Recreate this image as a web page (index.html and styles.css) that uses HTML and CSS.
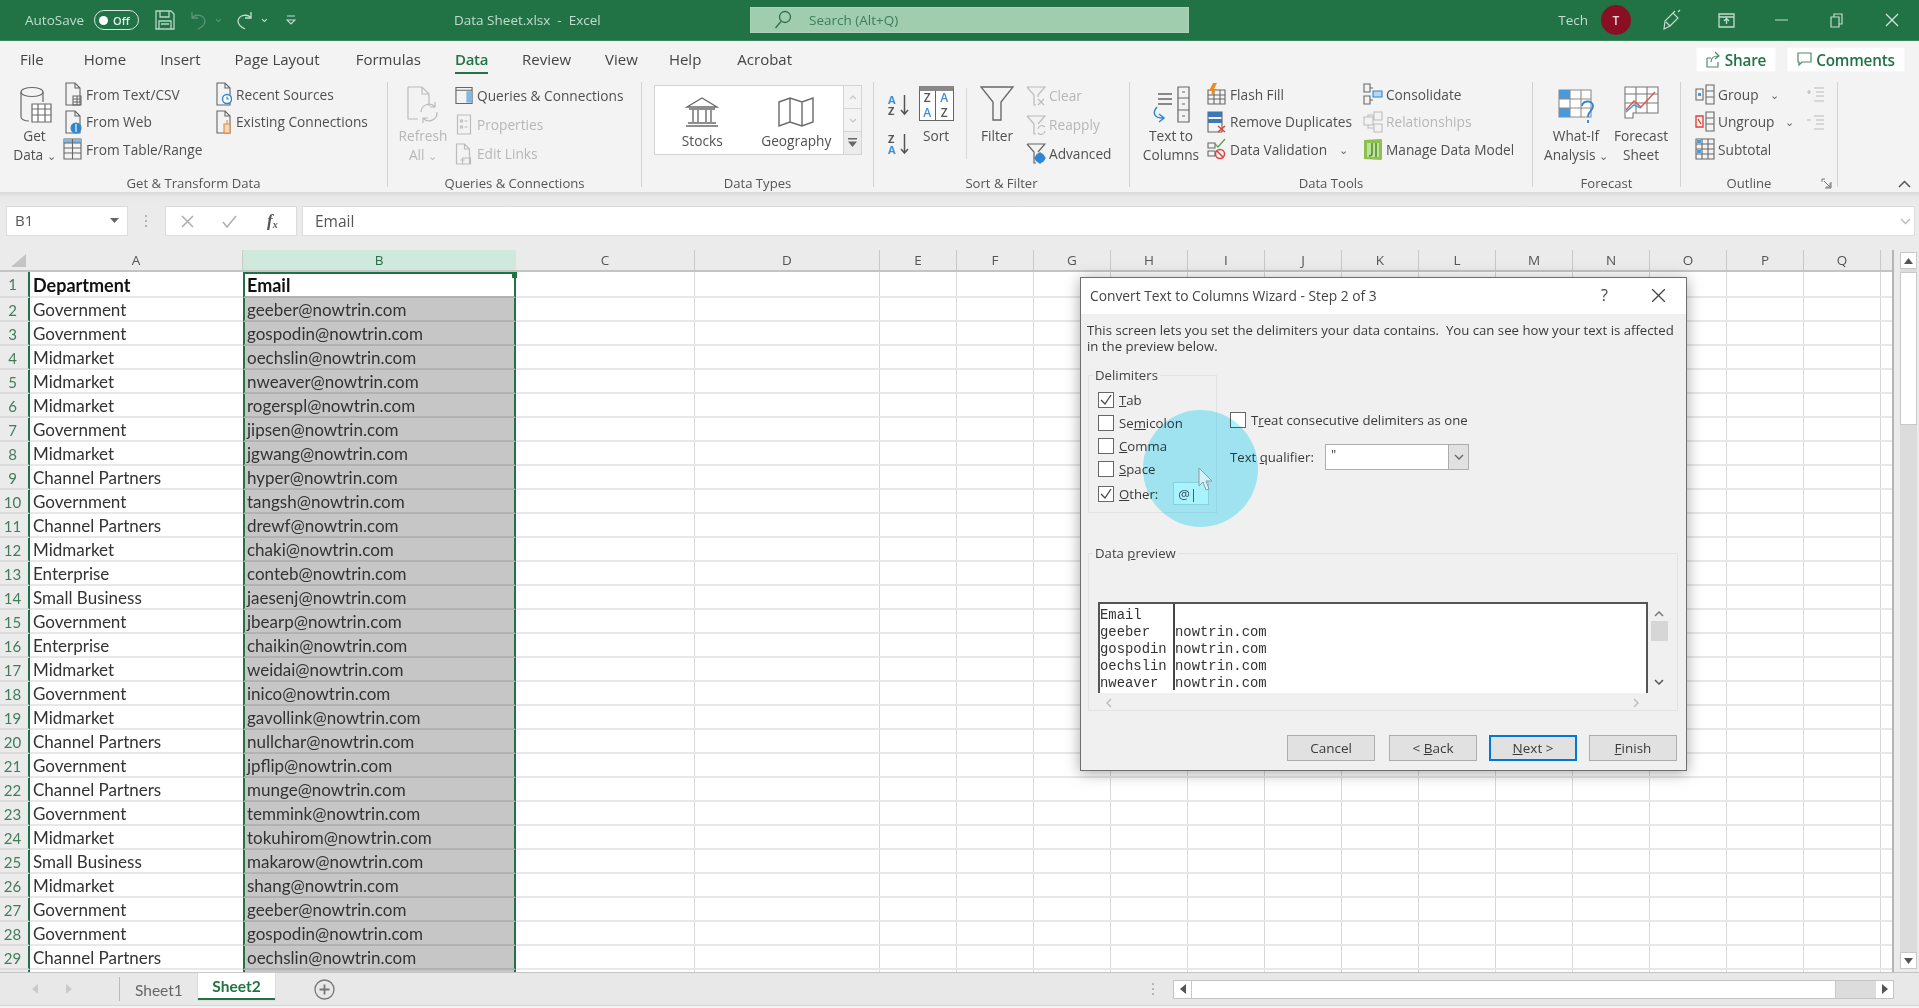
FILE: index.html
```html
<!DOCTYPE html>
<html lang="en">
<head>
<meta charset="utf-8">
<title>Data Sheet.xlsx - Excel</title>
<link rel="stylesheet" href="styles.css">
</head>
<body>
<div class="app">

<header class="titlebar">
  <div class="qat">
    <span class="autosave">AutoSave</span>
    <span class="toggle"><i class="knob"></i><b>Off</b></span>
    <svg class="q-save" width="20" height="20" viewBox="0 0 20 20" fill="none" stroke="#b9d5c5" stroke-width="1.3"><path d="M1 1h15l3 3v15H1z"/><path d="M5 1v6h9V1M4 19v-8h12v8M6 14h8"/></svg>
    <svg class="q-undo" width="19" height="20" viewBox="0 0 19 20" fill="none" stroke="#5b9678" stroke-width="1.3"><path d="M3 2v6h6M3 8c3-4 12-4 13 3 0 4-3 6-7 8"/></svg>
    <span class="q-caret dim">⌄</span>
    <svg class="q-redo" width="19" height="20" viewBox="0 0 19 20" fill="none" stroke="#c3dccd" stroke-width="1.3"><path d="M16 2v6h-6M16 8c-3-4-12-4-13 3 0 4 3 6 7 8"/></svg>
    <span class="q-caret">⌄</span>
    <svg class="q-custom" width="10" height="12" viewBox="0 0 10 12" fill="none" stroke="#c3dccd" stroke-width="1.2"><path d="M1 2h8M1 6h8l-4 4z"/></svg>
  </div>
  <div class="doc-title">Data Sheet.xlsx&nbsp; - &nbsp;Excel</div>
  <div class="search">
    <svg width="18" height="20" viewBox="0 0 18 20" fill="none" stroke="#2f6f4c" stroke-width="1.3"><circle cx="11" cy="7" r="5.5"/><path d="M7 11.5 1.5 18"/></svg>
    <span>Search (Alt+Q)</span>
  </div>
  <div class="win">
    <span class="user">Tech</span>
    <span class="avatar">T</span>
    <span class="wb"><svg width="20" height="22" viewBox="0 0 20 22" fill="none" stroke="#c3dccd" stroke-width="1.2"><path d="M2 20l1-8L11 4l5 5-8 8zM11 4l2-2M16 3l2-2M4 13l4 4"/></svg></span>
    <span class="wb"><svg width="17" height="15" viewBox="0 0 17 15" fill="none" stroke="#c3dccd" stroke-width="1.3"><path d="M1 1h15v13H1zM1 4h15M8.500 11V6M6 8l2.500-2.500L11 8"/></svg></span>
    <span class="wb"><svg width="13" height="2" viewBox="0 0 13 2" stroke="#c3dccd"><path d="M0 1h13"/></svg></span>
    <span class="wb"><svg width="13" height="15" viewBox="0 0 13 15" fill="none" stroke="#c3dccd" stroke-width="1.2"><path d="M1 4h8v10H1zM4 4V1h8v10H9"/></svg></span>
    <span class="wb"><svg width="14" height="14" viewBox="0 0 14 14" stroke="#d5e7dc" stroke-width="1.3"><path d="M1 1l12 12M13 1L1 13"/></svg></span>
  </div>
</header>

<nav class="tabs">
  <span class="tab">File</span><span class="tab">Home</span><span class="tab">Insert</span><span class="tab">Page Layout</span><span class="tab">Formulas</span><span class="tab on">Data</span><span class="tab">Review</span><span class="tab">View</span><span class="tab">Help</span><span class="tab">Acrobat</span>
  <div class="tab-actions">
    <span class="act share"><svg width="15" height="17" viewBox="0 0 15 17" fill="none" stroke="#4d8a69" stroke-width="1.2"><path d="M1 7h4M1 7v9h11v-5M5 11c0-4 3-6 7-6M9 1l4 4-4 3"/></svg>Share</span>
    <span class="act comments"><svg width="15" height="15" viewBox="0 0 15 15" fill="none" stroke="#4d8a69" stroke-width="1.2"><path d="M1 1h13v9H5l-3 3v-3H1z"/></svg>Comments</span>
  </div>
</nav>

<section class="ribbon">
  <div class="grp g1">
    <div class="body">
      <div class="big w53">
        <div class="ico"><svg width="34" height="39" viewBox="0 0 34 39" fill="none" stroke="#6a6a6a" stroke-width="1.2"><ellipse cx="14" cy="6" rx="11" ry="4.500"/><path d="M3 6v25c0 2 3 4 8 4M25 6v10"/><path fill="#fff" d="M14 18h19v18H14z"/><path d="M14 23h19M14 29h19M20 18v18M27 18v18"/></svg></div>
        <div class="t">Get</div><div class="t">Data <em>⌄</em></div>
      </div>
      <div class="col c27 w151 ml4">
        <div class="it"><svg class="ic17" width="17" height="24" viewBox="0 0 17 24" fill="none" stroke="#666" stroke-width="1.1"><path d="M1 1h9l5 5v17H1zM10 1v5h5"/><path d="M8 14h8v9H8zM8 17h8M8 20h8M12 14v9"/></svg><span>From Text/CSV</span></div>
        <div class="it"><svg class="ic17" width="17" height="24" viewBox="0 0 17 24" fill="none" stroke="#666" stroke-width="1.1"><path d="M1 1h9l5 5v17H1zM10 1v5h5"/><circle cx="11" cy="18" r="5" fill="#2f86cf" stroke="#2f86cf"/><path d="M11 14v8" stroke="#fff"/></svg><span>From Web</span></div>
        <div class="it"><svg class="ic17 tbl" width="19" height="22" viewBox="0 0 19 22" fill="none" stroke="#666" stroke-width="1.1"><path d="M1 1h17v20H1z"/><path fill="#7fb6e2" stroke="none" d="M1 1h17v4H1z"/><path d="M1 5h17M1 10h17M1 15h17M9.500 1v20"/></svg><span>From Table/Range</span></div>
      </div>
      <div class="col c27">
        <div class="it"><svg class="ic16" width="16" height="24" viewBox="0 0 16 24" fill="none" stroke="#666" stroke-width="1.1"><path d="M1 1h8l5 5v17H1zM9 1v5h5"/><circle cx="11" cy="17" r="4.500" fill="#fff" stroke="#2f86cf" stroke-width="1.4"/><path d="M11 14.500V17h2" stroke="#2f86cf"/></svg><span>Recent Sources</span></div>
        <div class="it"><svg class="ic16" width="16" height="24" viewBox="0 0 16 24" fill="none" stroke="#666" stroke-width="1.1"><path d="M1 1h8l5 5v17H1zM9 1v5h5"/><path d="M8 14h6v9H8z" fill="#f7d9b8" stroke="#e08a3c"/><path d="M11 10v4" stroke="#e08a3c"/></svg><span>Existing Connections</span></div>
      </div>
    </div>
    <div class="label">Get &amp; Transform Data</div>
  </div>

  <div class="grp g2">
    <div class="body">
      <div class="big w48 off">
        <div class="ico"><svg width="32" height="38" viewBox="0 0 32 38" fill="none" stroke="#bcbcbc" stroke-width="1.2"><path d="M1 1h14l7 7v12M1 1v32h10M15 1v7h7"/><path d="M14 26a8 8 0 0 1 14-5M30 26a8 8 0 0 1-14 6M28 16v5h-5M16 37v-5h5"/></svg></div>
        <div class="t">Refresh</div><div class="t">All <em>⌄</em></div>
      </div>
      <div class="col c29 ml8">
        <div class="it"><svg class="ic18" width="19" height="21" viewBox="0 0 19 21" fill="none" stroke="#666" stroke-width="1.2"><path d="M1 2h17v17H1zM1 5h17"/><path fill="#7fb6e2" stroke="none" d="M12 6h5v12h-5z"/></svg><span>Queries &amp; Connections</span></div>
        <div class="it off"><svg class="ic18" width="15" height="21" viewBox="0 0 15 21" fill="none" stroke="#bcbcbc" stroke-width="1.2"><path d="M1 1h13v19H1zM4 6h2v2H4zM4 12h2v2H4zM8 7h3M8 13h3"/></svg><span>Properties</span></div>
        <div class="it off"><svg class="ic18" width="17" height="22" viewBox="0 0 17 22" fill="none" stroke="#bcbcbc" stroke-width="1.2"><path d="M1 1h8l5 5v15H1zM9 1v5h5M7 15h8v6H7zM5 17h4"/></svg><span>Edit Links</span></div>
      </div>
    </div>
    <div class="label">Queries &amp; Connections</div>
  </div>

  <div class="grp g3">
    <div class="body">
      <div class="gallery">
        <div class="gal-item gi1"><svg width="34" height="30" viewBox="0 0 34 30" fill="none" stroke="#6a6a6a" stroke-width="1.4"><path d="M2 10 17 1l15 9zM4 12h26M8 13v12M13 13v12M21 13v12M26 13v12M3 26h28M1 29h32"/></svg><span>Stocks</span></div>
        <div class="gal-item gi2"><svg width="36" height="30" viewBox="0 0 36 30" fill="none" stroke="#6a6a6a" stroke-width="1.4"><path d="M1 5l11-4 12 4 11-4v24l-11 4-12-4-11 4zM12 1v24M24 5v24"/></svg><span>Geography</span></div>
        <div class="gal-scroll">
          <span class="gs"><svg width="8" height="5" viewBox="0 0 8 5" fill="none" stroke="#c5c5c5" stroke-width="1.2"><path d="M1 4l3-3 3 3"/></svg></span>
          <span class="gs"><svg width="8" height="5" viewBox="0 0 8 5" fill="none" stroke="#c5c5c5" stroke-width="1.2"><path d="M1 1l3 3 3-3"/></svg></span>
          <span class="gs"><svg width="9" height="10" viewBox="0 0 9 10" fill="#666"><path d="M0 0h9v1.500H0zM0 3.500h9L4.500 9z"/></svg></span>
        </div>
      </div>
    </div>
    <div class="label">Data Types</div>
  </div>

  <div class="grp g4">
    <div class="body">
      <div class="sort-mini">
        <div class="azi"><div class="azl"><b class="blu">A</b><b>Z</b></div><svg width="9" height="22" viewBox="0 0 9 22" fill="none" stroke="#555" stroke-width="1.500"><path d="M4.500 1v19M1 16l3.500 4L8 16"/></svg></div>
        <div class="azi"><div class="azl"><b>Z</b><b class="blu">A</b></div><svg width="9" height="22" viewBox="0 0 9 22" fill="none" stroke="#555" stroke-width="1.500"><path d="M4.500 1v19M1 16l3.500 4L8 16"/></svg></div>
      </div>
      <div class="big w50 ml2">
        <div class="ico"><div class="sorti"><span>Z</span><span class="blu">A</span><span class="blu">A</span><span>Z</span></div></div>
        <div class="t">Sort</div>
      </div>
      <div class="vdiv"></div>
      <div class="big w50 ml5">
        <div class="ico"><svg width="34" height="35" viewBox="0 0 34 35" fill="none" stroke="#6a6a6a" stroke-width="1.4"><path d="M1 1h32L21 16v18h-8V16z"/></svg></div>
        <div class="t">Filter</div>
      </div>
      <div class="col c29 ml4">
        <div class="it off"><svg class="ic20" width="20" height="20" viewBox="0 0 20 20" fill="none" stroke="#bcbcbc" stroke-width="1.2"><path d="M1 1h18l-7 8v2M1 1l7 8v10h2M12 13l6 6M18 13l-6 6"/></svg><span>Clear</span></div>
        <div class="it off"><svg class="ic20" width="20" height="20" viewBox="0 0 20 20" fill="none" stroke="#bcbcbc" stroke-width="1.2"><path d="M1 1h18l-7 8M1 1l7 8v10h2M12 14a4 4 0 0 1 7-2M19 16a4 4 0 0 1-7 2"/></svg><span>Reapply</span></div>
        <div class="it"><svg class="ic20" width="20" height="22" viewBox="0 0 20 22" fill="none" stroke="#666" stroke-width="1.2"><path d="M1 1h18l-7 8M1 1l7 8v11h2"/><circle cx="14" cy="15" r="4.500" fill="#2f86cf" stroke="#2f86cf"/><path d="M14 9v12M8 15h12" stroke="#2f86cf"/></svg><span>Advanced</span></div>
      </div>
    </div>
    <div class="label">Sort &amp; Filter</div>
  </div>

  <div class="grp g5">
    <div class="body">
      <div class="big w64">
        <div class="ico"><svg width="38" height="37" viewBox="0 0 38 37" fill="none" stroke="#666" stroke-width="1.2"><path d="M26 1h11v35H26zM26 12h11M26 24h11M30 6h3M30 18h3M30 30h3"/><path d="M6 8h14M6 13h14M6 18h14" stroke-width="1.4"/><path d="M5 21c-5 6-3 11 6 11M7 28l5 4-5 4" stroke="#2f86cf" stroke-width="1.500"/></svg></div>
        <div class="t">Text to</div><div class="t">Columns</div>
      </div>
      <div class="col c27 w156 ml4">
        <div class="it"><svg class="ic19" width="19" height="22" viewBox="0 0 19 22" fill="none" stroke="#666" stroke-width="1.1"><path d="M1 7h17v14H1zM1 12h17M1 16h17M7 7v14M13 7v14"/><path d="M6 0h4L7 6h3l-6 7 1-5H2z" fill="#ef8a1d" stroke="none"/></svg><span>Flash Fill</span></div>
        <div class="it"><svg class="ic19" width="19" height="22" viewBox="0 0 19 22" fill="none" stroke="#666" stroke-width="1.1"><path d="M1 1h14v20H1z"/><path d="M1 1h14v5H1zM1 8h14v4H1z" fill="#3c78b8" stroke="none"/><path d="M11 15l7 6M18 15l-7 6" stroke="#d8443c" stroke-width="1.500"/></svg><span>Remove Duplicates</span></div>
        <div class="it"><svg class="ic19" width="19" height="22" viewBox="0 0 19 22" fill="none" stroke="#666" stroke-width="1.1"><path d="M1 5h7v5H1zM1 13h7v5H1z"/><path d="M8 6l3 3 7-8" stroke="#5aa85a" stroke-width="1.400"/><circle cx="13" cy="16" r="4.500" stroke="#d8443c" stroke-width="1.500"/><path d="M10 13l6 6" stroke="#d8443c" stroke-width="1.500"/></svg><span>Data Validation</span><em class="chev ml12">⌄</em></div>
      </div>
      <div class="col c27">
        <div class="it"><svg class="ic20" width="20" height="22" viewBox="0 0 20 22" fill="none" stroke="#666" stroke-width="1.1"><path d="M1 1h6v8H1zM1 13h6v8H1zM7 5h3M7 17h3M10 11h9"/><path d="M10 8h9v6h-9z" fill="#b8d6ef" stroke="#2f86cf"/></svg><span>Consolidate</span></div>
        <div class="it off"><svg class="ic20" width="20" height="22" viewBox="0 0 20 22" fill="none" stroke="#bcbcbc" stroke-width="1.1"><path d="M1 6h9v8H1zM11 1h8v8h-8zM11 13h8v8h-8zM5 6V4h6M5 14v3h6"/></svg><span>Relationships</span></div>
        <div class="it"><svg class="ic20" width="20" height="23" viewBox="0 0 20 23"><path d="M1 2l17-1q1 0 1 2v17q0 2-1 2L1 21z" fill="#8cc152"/><path d="M4 5h12v14H4z" fill="#bfe19a"/><path d="M9 5v10q0 3-3 3M13 5v14" fill="none" stroke="#4c8c2b" stroke-width="1.500"/></svg><span>Manage Data Model</span></div>
      </div>
    </div>
    <div class="label">Data Tools</div>
  </div>

  <div class="grp g6">
    <div class="body">
      <div class="big w70">
        <div class="ico down"><svg width="37" height="35" viewBox="0 0 37 35" fill="none" stroke="#8c8c8c" stroke-width="1.1"><path d="M1 1h32v27H1z" fill="#fff"/><path d="M1 1h11v9H1zM1 19h11v9H1z" fill="#4a9ad9" stroke="none"/><path d="M1 10h32M1 19h32M12 1v27M23 1v27"/><path d="M24 17c1-6 11-6 11 0 0 5-5 5-5 11M30 31v3" stroke="#2f86cf" stroke-width="1.800"/></svg></div>
        <div class="t">What-If</div><div class="t">Analysis <em>⌄</em></div>
      </div>
      <div class="big w60">
        <div class="ico"><svg width="35" height="33" viewBox="0 0 35 33" fill="none" stroke="#777" stroke-width="1.1"><path d="M1 1h33v26H9v5H1z" fill="#fff"/><path d="M1 8h33M1 17h33M12 1v26M23 1v26"/><path d="M2 24l8-9 7 6 14-15" stroke="#e2574c" stroke-width="1.500"/><path d="M2 26l8-7 7 3" stroke="#4a9ad9" stroke-width="1.500"/></svg></div>
        <div class="t">Forecast</div><div class="t">Sheet</div>
      </div>
    </div>
    <div class="label">Forecast</div>
  </div>

  <div class="grp g7">
    <div class="body">
      <div class="col c27 w112">
        <div class="it"><svg class="ic20" width="20" height="21" viewBox="0 0 20 21" fill="none" stroke="#666" stroke-width="1.1"><path d="M11 1h8v19h-8zM11 7h8M11 13h8M1 5h7v11H1z"/><path d="M3 9h3v3H3z" fill="#4a9ad9" stroke="none"/></svg><span>Group</span><em class="chev ml11">⌄</em></div>
        <div class="it"><svg class="ic20" width="20" height="21" viewBox="0 0 20 21" fill="none" stroke="#666" stroke-width="1.1"><path d="M11 1h8v19h-8zM11 7h8M11 13h8"/><path d="M1 5h7v11H1zM3 8l3 5" stroke="#e2403a" stroke-width="1.400"/></svg><span>Ungroup</span><em class="chev ml11">⌄</em></div>
        <div class="it"><svg class="ic20" width="20" height="22" viewBox="0 0 20 22" fill="none" stroke="#666" stroke-width="1.1"><path d="M1 1h18v20H1zM1 11h18M7 1v20M13 1v20M1 6h18M1 16h18"/><path d="M2 2h4v3H2zM2 12h4v3H2z" fill="#4a9ad9" stroke="none"/></svg><span>Subtotal</span></div>
      </div>
      <div class="col c27 detail">
        <div class="it off"><svg width="18" height="16" viewBox="0 0 18 16" fill="none" stroke="#bcbcbc" stroke-width="1.2"><path d="M0 5h4M2 3v4M7 1h10M9 5h8M9 9h8M7 14h10"/></svg></div>
        <div class="it off"><svg width="18" height="16" viewBox="0 0 18 16" fill="none" stroke="#bcbcbc" stroke-width="1.2"><path d="M0 5h4M7 1h10M9 5h8M9 9h8M7 14h10"/></svg></div>
      </div>
    </div>
    <div class="label pr20">Outline<svg class="launch" width="11" height="11" viewBox="0 0 11 11" fill="none" stroke="#777"><path d="M10 4V10H4M1 4V1h3M3 3l6 6M9 5v4H5"/></svg></div>
  </div>
  <div class="grp-end"><svg width="13" height="8" viewBox="0 0 13 8" fill="none" stroke="#555" stroke-width="1.500"><path d="M1 7l5.500-5.500L12 7"/></svg></div>
</section>

<div class="band"></div>

<div class="formula">
  <div class="namebox"><span>B1</span><svg width="9" height="5" viewBox="0 0 9 5" fill="#666"><path d="M0 0h9L4.500 5z"/></svg></div>
  <div class="dots"><i></i><i></i><i></i></div>
  <div class="fxbox">
    <svg width="13" height="13" viewBox="0 0 13 13" stroke="#b0b0b0" stroke-width="1.600"><path d="M1 1l11 11M12 1L1 12"/></svg>
    <svg width="15" height="13" viewBox="0 0 15 13" fill="none" stroke="#b0b0b0" stroke-width="1.600"><path d="M1 7l4 5L14 1"/></svg>
    <span class="fx">f<sub>x</sub></span>
  </div>
  <div class="fbar"><span>Email</span><svg width="11" height="7" viewBox="0 0 11 7" fill="none" stroke="#bbb" stroke-width="1.400"><path d="M1 1l4.500 4.500L10 1"/></svg></div>
</div>

<div class="sheetwrap">
  <div class="sheet">
    <div class="colhead">
      <div class="corner"><svg width="16" height="14" viewBox="0 0 16 14" fill="#c4c4c4"><path d="M15 0v13H0z"/></svg></div>
      <div class="ch">A</div><div class="ch sel">B</div><div class="ch">C</div><div class="ch">D</div><div class="ch">E</div><div class="ch">F</div><div class="ch">G</div><div class="ch">H</div><div class="ch">I</div><div class="ch">J</div><div class="ch">K</div><div class="ch">L</div><div class="ch">M</div><div class="ch">N</div><div class="ch">O</div><div class="ch">P</div><div class="ch">Q</div>
    </div>
    <div class="rows">
      <div class="row first"><div class="rh">1</div><div class="ca hd">Department</div><div class="cb hd top">Email<i class="handle"></i></div><div class="rest"></div></div>
      <div class="row"><div class="rh">2</div><div class="ca">Government</div><div class="cb">geeber@nowtrin.com</div><div class="rest"></div></div>
      <div class="row"><div class="rh">3</div><div class="ca">Government</div><div class="cb">gospodin@nowtrin.com</div><div class="rest"></div></div>
      <div class="row"><div class="rh">4</div><div class="ca">Midmarket</div><div class="cb">oechslin@nowtrin.com</div><div class="rest"></div></div>
      <div class="row"><div class="rh">5</div><div class="ca">Midmarket</div><div class="cb">nweaver@nowtrin.com</div><div class="rest"></div></div>
      <div class="row"><div class="rh">6</div><div class="ca">Midmarket</div><div class="cb">rogerspl@nowtrin.com</div><div class="rest"></div></div>
      <div class="row"><div class="rh">7</div><div class="ca">Government</div><div class="cb">jipsen@nowtrin.com</div><div class="rest"></div></div>
      <div class="row"><div class="rh">8</div><div class="ca">Midmarket</div><div class="cb">jgwang@nowtrin.com</div><div class="rest"></div></div>
      <div class="row"><div class="rh">9</div><div class="ca">Channel Partners</div><div class="cb">hyper@nowtrin.com</div><div class="rest"></div></div>
      <div class="row"><div class="rh">10</div><div class="ca">Government</div><div class="cb">tangsh@nowtrin.com</div><div class="rest"></div></div>
      <div class="row"><div class="rh">11</div><div class="ca">Channel Partners</div><div class="cb">drewf@nowtrin.com</div><div class="rest"></div></div>
      <div class="row"><div class="rh">12</div><div class="ca">Midmarket</div><div class="cb">chaki@nowtrin.com</div><div class="rest"></div></div>
      <div class="row"><div class="rh">13</div><div class="ca">Enterprise</div><div class="cb">conteb@nowtrin.com</div><div class="rest"></div></div>
      <div class="row"><div class="rh">14</div><div class="ca">Small Business</div><div class="cb">jaesenj@nowtrin.com</div><div class="rest"></div></div>
      <div class="row"><div class="rh">15</div><div class="ca">Government</div><div class="cb">jbearp@nowtrin.com</div><div class="rest"></div></div>
      <div class="row"><div class="rh">16</div><div class="ca">Enterprise</div><div class="cb">chaikin@nowtrin.com</div><div class="rest"></div></div>
      <div class="row"><div class="rh">17</div><div class="ca">Midmarket</div><div class="cb">weidai@nowtrin.com</div><div class="rest"></div></div>
      <div class="row"><div class="rh">18</div><div class="ca">Government</div><div class="cb">inico@nowtrin.com</div><div class="rest"></div></div>
      <div class="row"><div class="rh">19</div><div class="ca">Midmarket</div><div class="cb">gavollink@nowtrin.com</div><div class="rest"></div></div>
      <div class="row"><div class="rh">20</div><div class="ca">Channel Partners</div><div class="cb">nullchar@nowtrin.com</div><div class="rest"></div></div>
      <div class="row"><div class="rh">21</div><div class="ca">Government</div><div class="cb">jpflip@nowtrin.com</div><div class="rest"></div></div>
      <div class="row"><div class="rh">22</div><div class="ca">Channel Partners</div><div class="cb">munge@nowtrin.com</div><div class="rest"></div></div>
      <div class="row"><div class="rh">23</div><div class="ca">Government</div><div class="cb">temmink@nowtrin.com</div><div class="rest"></div></div>
      <div class="row"><div class="rh">24</div><div class="ca">Midmarket</div><div class="cb">tokuhirom@nowtrin.com</div><div class="rest"></div></div>
      <div class="row"><div class="rh">25</div><div class="ca">Small Business</div><div class="cb">makarow@nowtrin.com</div><div class="rest"></div></div>
      <div class="row"><div class="rh">26</div><div class="ca">Midmarket</div><div class="cb">shang@nowtrin.com</div><div class="rest"></div></div>
      <div class="row"><div class="rh">27</div><div class="ca">Government</div><div class="cb">geeber@nowtrin.com</div><div class="rest"></div></div>
      <div class="row"><div class="rh">28</div><div class="ca">Government</div><div class="cb">gospodin@nowtrin.com</div><div class="rest"></div></div>
      <div class="row"><div class="rh">29</div><div class="ca">Channel Partners</div><div class="cb">oechslin@nowtrin.com</div><div class="rest"></div></div>
      <div class="row"><div class="rh"></div><div class="ca"></div><div class="cb"></div><div class="rest"></div></div>
    </div>
  </div>
  <div class="vscroll">
    <span class="vbtn"><svg width="9" height="6" viewBox="0 0 9 6" fill="#555"><path d="M4.500 0 9 6H0z"/></svg></span>
    <div class="vtrack"><div class="vthumb"></div></div>
    <span class="vbtn"><svg width="9" height="6" viewBox="0 0 9 6" fill="#555"><path d="M4.500 6 9 0H0z"/></svg></span>
  </div>
</div>

<footer class="tabbar">
  <svg class="nav1" width="6" height="10" viewBox="0 0 6 10" fill="#c9c9c9"><path d="M6 0v10L0 5z"/></svg>
  <svg class="nav2" width="6" height="10" viewBox="0 0 6 10" fill="#c9c9c9"><path d="M0 0v10l6-5z"/></svg>
  <i class="tabsep"></i>
  <span class="sheet-tab">Sheet1</span>
  <span class="sheet-tab active">Sheet2</span>
  <svg class="addsheet" width="21" height="21" viewBox="0 0 21 21" fill="none" stroke="#777" stroke-width="1.300"><circle cx="10.500" cy="10.500" r="9.500"/><path d="M10.500 5.500v10M5.500 10.500h10" stroke-width="1.800"/></svg>
  <div class="tb-dots"><i></i><i></i><i></i></div>
  <div class="hscroll">
    <span class="hbtn"><svg width="6" height="10" viewBox="0 0 6 10" fill="#555"><path d="M6 0v10L0 5z"/></svg></span>
    <div class="hthumb"></div>
    <div class="htrack"></div>
    <span class="hbtn"><svg width="6" height="10" viewBox="0 0 6 10" fill="#555"><path d="M0 0v10l6-5z"/></svg></span>
  </div>
</footer>
<div class="strip"></div>

<div class="dialog">
  <div class="dlg-title"><span>Convert Text to Columns Wizard - Step 2 of 3</span>
    <span class="help">?</span>
    <svg class="dlg-x" width="13" height="13" viewBox="0 0 13 13" stroke="#444" stroke-width="1.300"><path d="M0 0l13 13M13 0L0 13"/></svg>
  </div>
  <div class="dlg-body">
    <p class="intro">This screen lets you set the delimiters your data contains.&nbsp; You can see how your text is affected<br>in the preview below.</p>
    <div class="opts">
      <fieldset class="delims">
        <legend>Delimiters</legend>
        <label class="chk"><i class="box on"><svg width="12" height="12" viewBox="0 0 12 12" fill="none" stroke="#444" stroke-width="1.300"><path d="M1 6l4 4 6-9"/></svg></i><span><u>T</u>ab</span></label>
        <label class="chk"><i class="box"></i><span>Se<u>m</u>icolon</span></label>
        <label class="chk"><i class="box"></i><span><u>C</u>omma</span></label>
        <label class="chk"><i class="box"></i><span><u>S</u>pace</span></label>
        <label class="chk other"><i class="box on"><svg width="12" height="12" viewBox="0 0 12 12" fill="none" stroke="#444" stroke-width="1.300"><path d="M1 6l4 4 6-9"/></svg></i><span><u>O</u>ther:</span><span class="otherin">@|</span></label>
      </fieldset>
      <div class="opt-right">
        <label class="chk"><i class="box"></i><span>T<u>r</u>eat consecutive delimiters as one</span></label>
        <div class="qual"><span>Text <u>q</u>ualifier:</span>
          <div class="combo"><span>"</span><b><svg width="10" height="6" viewBox="0 0 10 6" fill="none" stroke="#666" stroke-width="1.300"><path d="M1 1l4 4 4-4"/></svg></b></div>
        </div>
      </div>
    </div>
    <fieldset class="preview">
      <legend>Data <u>p</u>review</legend>
      <div class="pv-wrap">
        <div class="pv">
          <div class="pv-a">Email<br>geeber<br>gospodin<br>oechslin<br>nweaver</div>
          <div class="pv-b"><br>nowtrin.com<br>nowtrin.com<br>nowtrin.com<br>nowtrin.com</div>
        </div>
        <div class="pv-v">
          <svg width="10" height="6" viewBox="0 0 10 6" fill="none" stroke="#777" stroke-width="1.500"><path d="M1 5l4-4 4 4"/></svg>
          <i></i>
          <svg class="pv-down" width="10" height="6" viewBox="0 0 10 6" fill="none" stroke="#555" stroke-width="1.500"><path d="M1 1l4 4 4-4"/></svg>
        </div>
      </div>
      <div class="pv-h">
        <svg width="6" height="10" viewBox="0 0 6 10" fill="none" stroke="#bbb" stroke-width="1.400"><path d="M5 1 1 5l4 4"/></svg>
        <svg width="6" height="10" viewBox="0 0 6 10" fill="none" stroke="#bbb" stroke-width="1.400"><path d="M1 1l4 4-4 4"/></svg>
      </div>
    </fieldset>
    <div class="btns">
      <span class="btn">Cancel</span><span class="btn">&lt; <u>B</u>ack</span><span class="btn def"><u>N</u>ext &gt;</span><span class="btn"><u>F</u>inish</span>
    </div>
  </div>
  <div class="spot"></div>
  <svg class="cursor" width="15" height="24" viewBox="0 0 15 24" fill="#ffffff88" stroke="#8a9aa0" stroke-width="1"><path d="M1 1v18l4-4 3 8 3-1-3-8h6z"/></svg>
</div>

</div>
</body>
</html>
```

FILE: styles.css
```css
*{box-sizing:border-box}
html,body{margin:0;padding:0;height:100%;overflow:hidden;background:#f3f3f3}
body{font-family:"Open Sans","Noto Sans",sans-serif;color:#444}
svg{display:block;flex:none}
em{font-style:normal}
.app{position:relative;width:1919px;height:1008px;display:flex;flex-direction:column;overflow:hidden;filter:blur(.55px)}

/* title bar */
.titlebar{height:41px;flex:none;background:#217346;border-bottom:1px solid #3b8560;display:grid;grid-template-columns:454px 296px 439px 1fr;align-items:center;color:#c3dccd;font-size:13px}
.qat{display:flex;align-items:center;padding-left:25px}
.autosave{width:69px;font-size:13.5px;white-space:nowrap}
.toggle{width:45px;height:20px;border:1.500px solid #d5e7dc;border-radius:10px;display:flex;align-items:center;padding:0 4px;gap:5px;font-size:11px}
.toggle b{font-weight:600;color:#e5f0ea}
.knob{width:9px;height:9px;border-radius:50%;background:#fff}
.q-save{margin-left:16px}
.q-undo{margin-left:14px}
.q-redo{margin-left:12px}
.q-caret{margin-left:5px;font-size:13px;line-height:8px;width:10px;margin-top:-6px}
.q-caret.dim{color:#5b9678}
.q-custom{margin-left:17px}
.doc-title{font-size:13.5px;white-space:nowrap}
.search{height:26px;background:#9fcdad;display:flex;align-items:center;padding-left:23px;gap:17px;color:#3f7d5b;font-size:13.5px;border:1px solid #aad4b7}
.win{display:flex;align-items:center;justify-content:flex-end;height:40px}
.user{font-size:13.5px;margin-right:13px}
.avatar{width:30px;height:30px;border-radius:50%;background:#8a0f24;color:#f2dada;font-size:12px;font-weight:600;display:flex;align-items:center;justify-content:center;margin-right:13px}
.wb{width:55px;display:flex;justify-content:center}

/* tabs */
.tabs{height:34px;flex:none;background:#f3f3f3;display:flex;align-items:flex-start;padding:6px 14px 0 20px;gap:34px;font-size:15px;color:#444}
.tab{height:25px;line-height:25px;white-space:nowrap}
.tab:nth-child(2){margin-left:6px}
.tab:nth-child(5){margin-left:2px}
.tab:nth-child(9){margin-left:-3px}
.tab:nth-child(10){margin-left:2px}
.tab.on{color:#217346;font-weight:600;box-shadow:0 2px 0 #217346;letter-spacing:-.3px}
.tab-actions{margin-left:auto;display:flex;gap:11px}
.act{height:25px;background:#fff;color:#217346;font-weight:600;font-size:15.300px;display:flex;align-items:center;justify-content:center;gap:4px;border:1px solid #f7f7f7;letter-spacing:-.2px}
.share{width:80px}
.comments{width:118px}

/* ribbon */
.ribbon{height:117px;flex:none;background:#f3f3f3;display:flex;padding:7px 0 5px;font-size:13.700px;color:#505050}
.grp{display:flex;flex-direction:column;border-right:1px solid #d2d2d2;flex:none}
.g1{width:388px}.g2{width:254px}.g3{width:232px}.g4{width:256px}.g5{width:403px}.g6{width:148px}.g7{width:157px}
.grp-end{flex:1;display:flex;justify-content:flex-end;align-items:flex-end;padding:0 8px 0 0;margin-bottom:-1px}
.body{flex:1;display:flex;align-items:flex-start;min-height:0}
.label{height:16px;line-height:16px;margin-bottom:-3.500px;text-align:center;font-size:13.100px;color:#555;position:relative;white-space:nowrap}
.pr20{padding-right:20px}
.launch{position:absolute;right:5px;top:3px}
.g1 .body{padding-left:8px}.g2 .body{padding-left:11px}.g3 .body{padding-left:12px}.g4 .body{padding-left:14px}.g5 .body{padding-left:9px}.g6 .body{padding-left:8px}.g7 .body{padding-left:14px}
.big{display:flex;flex-direction:column;align-items:center;text-align:center;flex:none}
.big .ico{height:44px;padding-top:4px}
.big .ico.down{padding-top:7px}
.big .t{height:19px;line-height:19px;white-space:nowrap}
.big em,.chev{font-size:11px;color:#666}
.off,.off em{color:#b7b7b7}
.w53{width:53px}.w48{width:48px}.w50{width:50px}.w64{width:64px}.w70{width:70px}.w60{width:60px}
.ml2{margin-left:2px}.ml4{margin-left:4px}.ml5{margin-left:5px}.ml8{margin-left:8px}.ml11{margin-left:11px}.ml12{margin-left:12px}
.col{display:flex;flex-direction:column;flex:none}
.c27{margin-top:-1.500px}
.c27 .it{height:27.500px}
.c29{margin-top:-1px}
.c29 .it{height:29px}
.w151{width:151px}.w156{width:156px}.w112{width:112px}
.it{display:flex;align-items:center;white-space:nowrap}
.ic16{margin-right:4px}
.ic17{margin-right:4px}
.ic17.tbl{margin-left:-2px}
.ic18{margin-right:4px;width:18px}
.ic19{margin-right:4px}
.ic20{margin-right:3px}
.detail .it{height:28px}
.gallery{margin-top:3px;width:208px;height:70px;background:#fff;border:1px solid #d4d4d4;display:flex}
.gal-item{display:flex;flex-direction:column;align-items:center;padding-top:11px;gap:4px}
.gi1{width:95px}.gi2{width:94px}
.gal-scroll{width:18px;margin-left:auto;display:flex;flex-direction:column;background:#f3f3f3;border-left:1px solid #d4d4d4}
.gs{flex:1;display:flex;align-items:center;justify-content:center;border-bottom:1px solid #d4d4d4}
.gs:last-child{border-bottom:0;background:#ececec}
.sort-mini{width:21px;padding-top:12px;display:flex;flex-direction:column;gap:17px}
.azi{display:flex;height:22px;gap:2px}
.azl{width:10px;display:flex;flex-direction:column;font-size:11px;line-height:11px;color:#555}
.azl b{font-weight:700}
.blu,.azl .blu{color:#3f8fd2}
.sorti{width:35px;height:35px;background:#fff;border:1px solid #666;border-top:5px solid #888;display:grid;grid-template-columns:1fr 1fr;font-size:12px;font-weight:600;line-height:14px;text-align:center;color:#555}
.sorti span:nth-child(odd){border-right:1px solid #666}
.vdiv{width:1px;height:71px;background:#d9d9d9;margin:6px 0 0 5px}

/* bands */
.band{height:14px;flex:none;background:linear-gradient(#d9d9d9,#e9e9e9 40%,#ebebeb)}
.formula{height:44px;flex:none;background:#ebebeb;display:flex;align-items:flex-start;padding-left:6px}
.namebox{width:122px;height:30px;background:#fff;border:1px solid #dcdcdc;display:flex;align-items:center;justify-content:space-between;padding:0 8px 2px 8px;font-size:15px;color:#555}
.dots{width:37px;height:30px;display:flex;flex-direction:column;align-items:center;justify-content:center;gap:3px;padding-right:2px}
.dots i,.tb-dots i{width:2px;height:2px;background:#b5b5b5;display:block}
.fxbox{width:132px;height:30px;background:#fff;border:1px solid #dcdcdc;display:flex;align-items:center;padding-left:15px;gap:28px}
.fx{font:italic 700 17px "Liberation Serif",serif;color:#555;margin-left:2px}
.fx sub{font-size:10px;vertical-align:-2px;line-height:0}
.fbar{margin-left:5px;width:1613px;height:30px;background:#fff;border:1px solid #dcdcdc;display:flex;align-items:center;justify-content:space-between;padding:0 3px 0 12px;font-size:15.500px;color:#555}

/* sheet */
.sheetwrap{height:722px;flex:none;display:flex;background:#fff}
.sheet{width:1894px;flex:none;overflow:hidden;border-right:2px solid #b5b5b5;display:flex;flex-direction:column}
.colhead{height:22px;flex:none;display:grid;grid-template-columns:30px 213px 273px 179px 185px repeat(13,77px);background:#ebebeb;border-bottom:2px solid #c4c4c4}
.corner{display:flex;justify-content:flex-end;align-items:flex-end;padding:0 3px 2px 0}
.ch{display:flex;align-items:center;justify-content:center;font-size:13.500px;color:#555;border-right:1px solid #c9c9c9}
.ch.sel{background:#cfe9dc;color:#2c6b49;border-right-color:#cfe9dc}
.rows{flex:1;overflow:hidden}
.row{height:24px;display:grid;grid-template-columns:30px 213px 273px 1fr;grid-template-rows:minmax(0,1fr);font-family:Lato,"Open Sans",sans-serif;font-size:17px;color:#333}
.row.first{height:26px}
.rh{background:#ebebeb;color:#3f7d5b;font-size:15px;text-align:center;line-height:24px;border-bottom:2px solid #dcdcdc;border-right:2px solid #217346;padding-right:3px}
.ca,.cb{white-space:nowrap;padding-left:3px;line-height:24px;border-bottom:2px solid #e8e8e8}
.ca{background:#fff}
.cb{background:#c6c6c6;border-bottom-color:#b2b2b2;border-left:2px solid #217346;border-right:2px solid #217346;padding-left:2px;position:relative}
.hd{font-weight:700;font-size:18px;color:#111;line-height:27px}
.cb.top{background:#fff;border-top:2px solid #217346;line-height:23px;border-bottom-color:#b2b2b2}
.handle{position:absolute;right:-3px;top:-2px;width:5px;height:6px;background:#217346}
.rest{border-bottom:2px solid #e8e8e8;background:linear-gradient(#d8d8d8,#d8d8d8) 178px 0/1px 100% no-repeat,linear-gradient(#d8d8d8,#d8d8d8) 363px 0/1px 100% no-repeat,repeating-linear-gradient(90deg,#fff 0 76px,#d8d8d8 76px 77px) 364px 0 no-repeat #fff}
.vscroll{flex:1;background:#ebebeb;display:flex;flex-direction:column;padding:2px 2px 3px 6px}
.vbtn{height:17px;flex:none;background:#fff;border:1px solid #c9c9c9;display:flex;align-items:center;justify-content:center}
.vtrack{flex:1;background:#dcdcdc;padding-top:3px}
.vthumb{height:153px;background:#fff;border:1px solid #c9c9c9}

/* sheet tabs */
.tabbar{height:33px;flex:none;background:#e8e8e8;border-top:1px solid #c4c4c4;display:flex;align-items:center;position:relative}
.nav1{margin-left:32px}
.nav2{margin-left:28px}
.tabsep{width:1px;height:24px;background:#bbb;margin-left:47px}
.sheet-tab{font-family:Lato,"Open Sans",sans-serif;font-size:15.500px;color:#666;margin-left:15px;width:63px;padding-top:2px}
.sheet-tab.active{margin-left:0;width:77px;height:27px;background:#fff;color:#217346;font-weight:700;text-align:center;line-height:26px;padding-top:0;border-bottom:2px solid #217346;align-self:flex-start;box-shadow:0 0 0 .5px #cfcfcf}
.addsheet{margin-left:39px}
.tb-dots{margin-left:817px;display:flex;flex-direction:column;gap:3px}
.hscroll{margin-left:19px;width:721px;height:19px;display:flex;border:1px solid #c4c4c4;background:#dcdcdc}
.hbtn{width:17px;background:#fff;flex:none;display:flex;align-items:center;justify-content:center}
.hthumb{width:645px;background:#fff;border:1px solid #c9c9c9;border-width:0 1px}
.htrack{flex:1}
.strip{flex:1;background:#f4f4f4;border-top:1px solid #d5d5d5}

/* dialog */
.dialog{position:absolute;left:1080px;top:277px;width:607px;height:494px;background:#f0f0f0;border:1px solid #6f6f6f;box-shadow:0 2px 14px rgba(0,0,0,.35);font-size:13.200px;color:#3a3a3a;display:flex;flex-direction:column}
.dlg-title{height:36px;flex:none;background:#fff;display:flex;align-items:center;padding:0 0 2px 9px;font-size:13.800px;color:#444;position:relative;justify-content:flex-start}
.help{margin-left:auto;font-size:16px;margin-right:44px}
.dlg-x{margin-right:21px}
.dlg-body{flex:1;padding:8px 8px 9px 6px;display:flex;flex-direction:column}
.intro{margin:0;line-height:16px;height:32px;font-size:13.200px;color:#3a3a3a;white-space:nowrap}
fieldset{margin:0;border:1px solid #e2e2e2;min-width:0}
legend{padding:0 2px;margin-left:-5px;font-size:13.200px;line-height:16px;color:#444}
.opts{display:flex;gap:13px;margin-top:13px;align-items:flex-start;margin-left:1px}
.delims{width:129px;height:146px;padding:5px 0 0 9px}
.chk{display:flex;align-items:center;gap:5px;height:23px;white-space:nowrap}
.chk.other{height:25px;margin-top:1px}
.box{width:16px;height:16px;background:#fff;border:1.500px solid #666;display:flex;align-items:center;justify-content:center;flex:none}
.otherin{margin-left:10px;width:36px;height:23px;border:1px solid #cdd;background:#fff;color:#555;font-size:13px;padding:2px 0 0 4px;flex:none}
.opt-right{padding-top:41px;display:flex;flex-direction:column}
.qual{display:flex;align-items:center;margin-top:13px;gap:0}
.qual>span{width:95px;white-space:nowrap}
.combo{width:144px;height:26px;background:#fff;border:1px solid #adadad;display:flex;align-items:stretch;padding-left:5px}
.combo span{flex:1}
.combo b{width:20px;background:#e1e1e1;border-left:1px solid #adadad;display:flex;align-items:center;justify-content:center}
.preview{width:590px;height:166px;margin:32px 0 0 1px;padding:41px 9px 0 9px}
.pv-wrap{display:flex;height:91px}
.pv{width:550px;flex:none;background:#fff;border:2px solid #555;border-bottom:0;display:flex;font:13.900px/17px "Liberation Mono",monospace;color:#333;overflow:hidden;padding-top:3px}
.pv-a{width:75px;height:100%;flex:none;border-right:2px solid #444;margin-top:-3px;padding-top:3px}
.pv-v{flex:1;display:flex;flex-direction:column;align-items:center;padding:9px 0 8px 2px}
.pv-v i{width:17px;height:20px;background:#d6d6d6;margin-top:4px}
.pv-down{margin-top:auto}
.pv-h{display:flex;justify-content:space-between;padding:5px 29px 0 8px}
.btns{margin-top:auto;display:flex;gap:12px;justify-content:flex-end;padding-right:1px}
.btn{width:88px;height:26px;background:#e1e1e1;border:1px solid #adadad;text-align:center;line-height:24px;font-size:13.500px;white-space:pre}
.btn:first-child{margin-right:2px}
.btn.def{border:2px solid #0078d7;line-height:22px}
.spot{position:absolute;left:62px;top:132px;width:115px;height:117px;border-radius:50%;background:#a9f2ff;mix-blend-mode:multiply;pointer-events:none}
.cursor{position:absolute;left:117px;top:189px}
```
